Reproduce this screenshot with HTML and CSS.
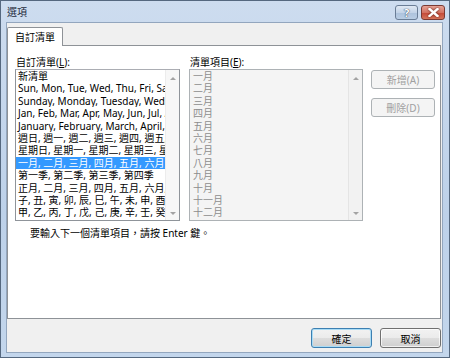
FILE: index.html
```html
<!DOCTYPE html>
<html lang="zh-Hant">
<head>
<meta charset="UTF-8">
<meta name="viewport" content="width=device-width, initial-scale=1.0">
<title>選項</title>
<link rel="stylesheet" href="styles.css">
</head>
<body>

<div class="window">
    <!-- Title bar -->
    <div class="titlebar">
        <span class="title">選項</span>
        <div class="caption-buttons">
            <div class="cap-btn help">?</div>
            <div class="cap-btn close">
                <svg width="11" height="9" viewBox="0 0 11 9">
                    <path d="M1.5 1 L9.5 8 M9.5 1 L1.5 8" stroke="#ffffff" stroke-width="2.4" stroke-linecap="square"/>
                </svg>
            </div>
        </div>
    </div>

    <div class="client">
        <!-- Tabs -->
        <div class="tab-strip">
            <div class="tab active">自訂清單</div>
        </div>

        <div class="panel">
            <div class="lists">
                <div class="list-col">
                    <div class="field-label">自訂清單(<u>L</u>):</div>
                    <div class="listbox">
                        <div class="rows">
                            <div class="row">新清單</div>
                            <div class="row">Sun, Mon, Tue, Wed, Thu, Fri, Sat</div>
                            <div class="row">Sunday, Monday, Tuesday, Wednesday, Thursday, Friday, Saturday</div>
                            <div class="row">Jan, Feb, Mar, Apr, May, Jun, Jul, Aug, Sep, Oct, Nov, Dec</div>
                            <div class="row">January, February, March, April, May, June, July, August</div>
                            <div class="row">週日, 週一, 週二, 週三, 週四, 週五, 週六</div>
                            <div class="row">星期日, 星期一, 星期二, 星期三, 星期四, 星期五, 星期六</div>
                            <div class="row selected">一月, 二月, 三月, 四月, 五月, 六月, 七月, 八月, 九月, 十月</div>
                            <div class="row">第一季, 第二季, 第三季, 第四季</div>
                            <div class="row">正月, 二月, 三月, 四月, 五月, 六月, 七月, 八月, 九月, 十月</div>
                            <div class="row">子, 丑, 寅, 卯, 辰, 巳, 午, 未, 申, 酉, 戌, 亥</div>
                            <div class="row">甲, 乙, 丙, 丁, 戊, 己, 庚, 辛, 壬, 癸</div>
                        </div>
                        <div class="vscroll">
                            <span class="arrow up"></span>
                            <span class="arrow down"></span>
                        </div>
                    </div>
                </div>

                <div class="list-col">
                    <div class="field-label">清單項目(<u>E</u>):</div>
                    <div class="listbox disabled">
                        <div class="rows">
                            <div class="row">一月</div>
                            <div class="row">二月</div>
                            <div class="row">三月</div>
                            <div class="row">四月</div>
                            <div class="row">五月</div>
                            <div class="row">六月</div>
                            <div class="row">七月</div>
                            <div class="row">八月</div>
                            <div class="row">九月</div>
                            <div class="row">十月</div>
                            <div class="row">十一月</div>
                            <div class="row">十二月</div>
                        </div>
                        <div class="vscroll">
                            <span class="arrow up"></span>
                            <span class="arrow down"></span>
                        </div>
                    </div>
                </div>

                <div class="side-buttons">
                    <button class="btn small" disabled>新增(A)</button>
                    <button class="btn small" disabled>刪除(D)</button>
                </div>
            </div>

            <p class="hint">要輸入下一個清單項目，請按 Enter 鍵。</p>
        </div>

        <!-- OK / Cancel -->
        <div class="footer">
            <button class="btn default">確定</button>
            <button class="btn">取消</button>
        </div>
    </div>
</div>

</body>
</html>
```

FILE: styles.css
```css
    body {
        margin: 0;
        padding: 0;
        font-family: 'Noto Sans', 'Noto Sans CJK TC', sans-serif;
        font-size: 10px;
        color: #000;
        background: #ffffff;
    }

    .window {
        width: 450px;
        height: 358px;
        box-sizing: border-box;
        border: 1px solid #55687f;
        background: linear-gradient(#cddcef, #bdd1e9 60%, #c3d6ec);
        display: flex;
        flex-direction: column;
    }

    /* Title bar */
    .titlebar {
        height: 21px;
        display: flex;
        align-items: center;
        justify-content: space-between;
        padding: 0 4px 0 6px;
    }

    .title {
        font-size: 10px;
        color: #1e2b3c;
    }

    .caption-buttons {
        display: flex;
        gap: 3px;
        margin-top: 1px;
    }

    .cap-btn {
        width: 23px;
        height: 15px;
        box-sizing: border-box;
        border-radius: 3px;
        display: flex;
        align-items: center;
        justify-content: center;
    }

    .cap-btn.help {
        border: 1px solid #6a7d96;
        background: linear-gradient(#dfe8f3, #c4d4e8 50%, #adc2dc 51%, #b9cde4);
        color: #ffffff;
        font-size: 11px;
        font-weight: bold;
        text-shadow: 0 0 1px #2c3e58, 0 0 1px #2c3e58;
        line-height: 13px;
    }

    .cap-btn.close {
        width: 24px;
        border: 1px solid #7a3a33;
        background: linear-gradient(#e8a497, #d37262 50%, #c34736 51%, #d6745a);
    }

    .cap-btn.close svg {
        filter: drop-shadow(0 0 1px #5a1b10);
    }

    /* Client area */
    .client {
        flex: 1;
        margin: 0 6px 4px 5px;
        background: #f0f0f0;
        border: 1px solid #93a6be;
        display: flex;
        flex-direction: column;
        padding: 4px 1px 4px 0;
    }

    .tab-strip {
        display: flex;
        height: 19px;
        position: relative;
        z-index: 1;
    }

    .tab {
        width: 56px;
        box-sizing: border-box;
        border: 1px solid #8e9297;
        border-bottom: none;
        background: #ffffff;
        padding-left: 7px;
        line-height: 19px;
        border-radius: 2px 2px 0 0;
    }

    .panel {
        flex: 1;
        margin-top: -1px;
        background: #ffffff;
        border: 1px solid #8e9297;
        padding: 10px 7px 0 7px;
    }

    .lists {
        display: flex;
        align-items: flex-start;
    }

    .list-col {
        display: flex;
        flex-direction: column;
    }

    .list-col + .list-col {
        margin-left: 9px;
    }

    .field-label {
        line-height: 12px;
        height: 12px;
        margin-bottom: 1px;
        padding-left: 1px;
    }

    .listbox {
        width: 165px;
        height: 152px;
        box-sizing: border-box;
        border: 1px solid #8f949a;
        border-top-color: #abadb3;
        display: flex;
        background: #ffffff;
    }

    .listbox.disabled {
        width: 174px;
        background: #f4f4f4;
        border-color: #adb2b5;
        color: #8d8d8d;
    }

    .rows {
        flex: 1;
        overflow: hidden;
    }

    .row {
        line-height: 12.4px;
        height: 12.4px;
        white-space: nowrap;
        overflow: hidden;
        padding-left: 2px;
    }

    .listbox.disabled .row {
        padding-left: 3px;
    }

    .row.selected {
        background: #3399ff;
        color: #ffffff;
    }

    .vscroll {
        width: 13px;
        border-left: 1px solid #ececec;
        background: #f7f7f7;
        display: flex;
        flex-direction: column;
        justify-content: space-between;
        align-items: center;
        padding: 7px 0 5px 0;
    }

    .listbox.disabled .vscroll {
        background: #f2f2f2;
        border-left-color: #e4e4e4;
    }

    .arrow {
        width: 0;
        height: 0;
        border-left: 3px solid transparent;
        border-right: 3px solid transparent;
    }

    .arrow.up {
        border-bottom: 3px solid #a3a3a3;
    }

    .arrow.down {
        border-top: 3px solid #a3a3a3;
    }

    .side-buttons {
        display: flex;
        flex-direction: column;
        gap: 9px;
        margin-left: 8px;
        margin-top: 14px;
    }

    /* Buttons */
    .btn {
        font-family: inherit;
        font-size: 10px;
        width: 61px;
        height: 20px;
        padding: 0;
        border: 1px solid #707070;
        border-radius: 3px;
        background: linear-gradient(#f2f2f2, #ebebeb 50%, #dddddd 51%, #cfcfcf);
        color: #000;
        box-shadow: inset 0 0 0 1px rgba(255, 255, 255, 0.7);
    }

    .btn.small {
        width: 64px;
        height: 19px;
    }

    .btn:disabled {
        background: #f4f4f4;
        border-color: #adb2b5;
        color: #a0a0a0;
        box-shadow: none;
    }

    .btn.default {
        border-color: #3c7fb1;
        box-shadow: inset 0 0 0 1px #a9dcf6;
    }

    .hint {
        margin: 6px 0 0 15px;
        line-height: 12px;
    }

    .footer {
        display: flex;
        justify-content: flex-end;
        gap: 8px;
        margin-top: 9px;
    }
```
